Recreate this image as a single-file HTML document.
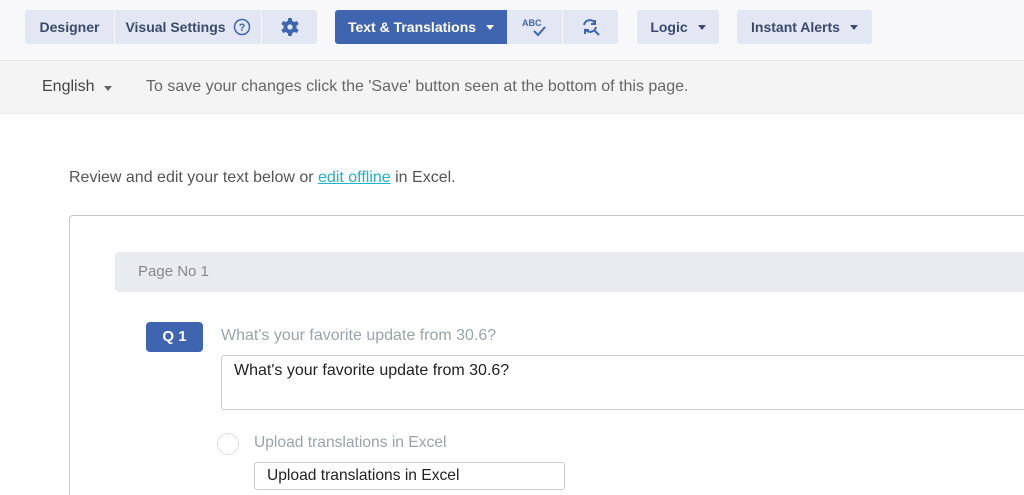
<!DOCTYPE html>
<html style="overflow:hidden"><head><style>
*{box-sizing:border-box;margin:0;padding:0}
html,body{width:1024px;height:495px;overflow:hidden}
body{background:#fff;font-family:"Liberation Sans",sans-serif;position:relative}
.top{position:absolute;left:0;top:0;width:1024px;height:61px;background:#f8f8fb;border-bottom:1px solid #e6e8f0}
.b{position:absolute;top:10px;height:34px;background:#e2e7f3;color:#3b4a6b;font-size:14px;font-weight:bold;display:flex;align-items:center;justify-content:center;border-radius:3px}
.car{display:inline-block;width:0;height:0;border-left:4px solid transparent;border-right:4px solid transparent;border-top:5px solid currentColor;margin-left:10px}
.bar2{position:absolute;left:0;top:61px;width:1024px;height:53px;background:#f4f4f5;border-bottom:1px solid #ebebeb;font-size:16px;color:#555}
.box{position:absolute;left:69px;top:215px;width:1000px;height:300px;border:1px solid #c8c8c8;border-radius:4px}
</style></head><body>
<div class="top">
<div class="b" style="left:25px;width:89px;border-radius:3px 0 0 3px">Designer</div>
<div class="b" style="left:115px;width:146px;border-radius:0">Visual Settings <svg width="18" height="18" style="margin-left:7px" viewBox="0 0 18 18"><circle cx="9" cy="9" r="7.5" fill="none" stroke="#4065b0" stroke-width="1.5"/><text x="9" y="13" font-size="11" text-anchor="middle" fill="#4065b0" font-family="Liberation Sans">?</text></svg></div>
<div class="b" style="left:262px;width:55px;border-radius:0 3px 3px 0"><svg width="20" height="20" viewBox="0 0 20 20"><g fill="#4065b0"><circle cx="10" cy="10" r="6.5"/><rect x="8" y="1" width="4" height="18" rx="1"/><rect x="8" y="1" width="4" height="18" rx="1" transform="rotate(60 10 10)"/><rect x="8" y="1" width="4" height="18" rx="1" transform="rotate(120 10 10)"/></g><circle cx="10" cy="10" r="2.6" fill="#e2e7f3"/></svg></div>
<div class="b" style="left:335px;width:172px;background:#4065b0;color:#fff;border-radius:3px 0 0 3px">Text &amp; Translations<span class="car"></span></div>
<div class="b" style="left:507px;width:55px;border-radius:0"><svg width="30" height="22" viewBox="0 0 30 22"><text x="2" y="10" font-size="9" font-weight="bold" fill="#4065b0" font-family="Liberation Sans">ABC</text><path d="M14 15l4 4 7-8" fill="none" stroke="#4065b0" stroke-width="2"/></svg></div>
<div class="b" style="left:563px;width:55px;border-radius:0 3px 3px 0"><svg width="20" height="20" viewBox="0 0 20 20" fill="none" stroke="#4065b0" stroke-width="2"><path d="M3 8a6 6 0 0 1 11-2M15 10a6 6 0 0 1-11 2"/><path d="M14 3v4h-4M4 17v-4h4M13 13l5 5"/></svg></div>
<div class="b" style="left:637px;width:82px">Logic<span class="car"></span></div>
<div class="b" style="left:737px;width:135px">Instant Alerts<span class="car"></span></div>
</div>
<div class="bar2">
<div style="position:absolute;left:42px;top:17px;color:#444">English<span class="car" style="color:#666"></span></div>
<div style="position:absolute;left:146px;top:17px;color:#666">To save your changes click the 'Save' button seen at the bottom of this page.</div>
</div>
<div style="position:absolute;left:69px;top:169px;font-size:16px;color:#555">Review and edit your text below or <span style="color:#1fb3c9;text-decoration:underline">edit offline</span> in Excel.</div>
<div class="box"></div>
<div style="position:absolute;left:115px;top:252px;width:920px;height:40px;background:#e9ecef;border-radius:4px;color:#888;font-size:15px;padding:11px 0 0 23px">Page No 1</div>
<div style="position:absolute;left:146px;top:322px;width:57px;height:30px;background:#4065b0;border-radius:4px;color:#fff;font-weight:bold;font-size:15px;text-align:center;line-height:30px">Q 1</div>
<div style="position:absolute;left:221px;top:327px;color:#9aa4ad;font-size:16px">What's your favorite update from 30.6?</div>
<div style="position:absolute;left:221px;top:355px;width:820px;height:55px;border:1px solid #ccc;border-radius:3px;color:#222;font-size:16px;padding:6px 12px">What's your favorite update from 30.6?</div>
<div style="position:absolute;left:217px;top:433px;width:22px;height:22px;border:1.5px solid #ddd;border-radius:50%"></div>
<div style="position:absolute;left:254px;top:434px;color:#9aa4ad;font-size:15.6px">Upload translations in Excel</div>
<div style="position:absolute;left:254px;top:462px;width:311px;height:28px;border:1px solid #ccc;border-radius:3px;color:#222;font-size:15.6px;padding:4px 12px">Upload translations in Excel</div>
</body></html>
